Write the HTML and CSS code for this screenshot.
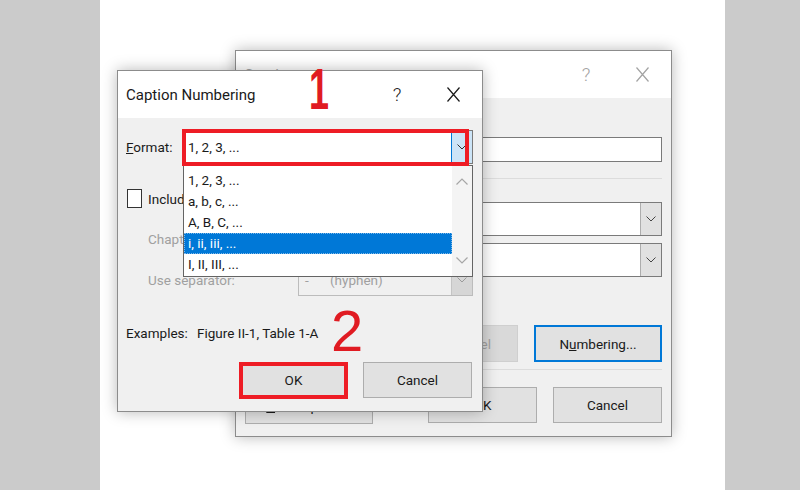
FILE: index.html
```html
<!DOCTYPE html>
<html lang="en">
<head>
    <meta charset="UTF-8">
    <title>Caption Numbering</title>
    <link rel="stylesheet" href="styles.css">
</head>
<body>
<div class="desk">
    <div class="paper">

        <!-- Caption dialog (behind) -->
        <div class="dialog dialog-back">
            <div class="titlebar inactive">
                <span class="title">Caption</span>
                <span class="help">?</span>
                <span class="close">
                    <svg width="13" height="15" viewBox="0 0 13 15"><path d="M0.5 0.5 L12.5 14.5 M12.5 0.5 L0.5 14.5" stroke="currentColor" stroke-width="1.2" fill="none"/></svg>
                </span>
            </div>
            <div class="back-body">
                <div class="back-label">Caption:</div>
                <div class="textbox">Figure 1</div>
                <div class="rule rule-top"></div>
                <div class="opt-row">
                    <span class="opt-label">Label:</span>
                    <div class="combo">
                        <span class="combo-text">Figure</span>
                        <span class="combo-arrow">
                            <svg width="10" height="6" viewBox="0 0 10 6"><path d="M0.5 0.5 L5 5 L9.5 0.5" stroke="currentColor" fill="none"/></svg>
                        </span>
                    </div>
                </div>
                <div class="opt-row">
                    <span class="opt-label">Position:</span>
                    <div class="combo">
                        <span class="combo-text">Below selected item</span>
                        <span class="combo-arrow">
                            <svg width="10" height="6" viewBox="0 0 10 6"><path d="M0.5 0.5 L5 5 L9.5 0.5" stroke="currentColor" fill="none"/></svg>
                        </span>
                    </div>
                </div>
                <div class="check-row back-check">
                    <span class="checkbox"></span>
                    <span>Exclude label from caption</span>
                </div>
                <div class="btn-row wide">
                    <button class="btn">New Label...</button>
                    <button class="btn disabled">Delete Label</button>
                    <button class="btn focused">N<u>u</u>mbering...</button>
                </div>
                <div class="rule rule-bottom"></div>
                <div class="btn-row wide last">
                    <button class="btn"><u>A</u>utoCaption...</button>
                    <button class="btn small">OK</button>
                    <button class="btn small">Cancel</button>
                </div>
            </div>
        </div>

        <!-- Caption Numbering dialog (front) -->
        <div class="dialog dialog-front">
            <div class="titlebar">
                <span class="title">Caption Numbering</span>
                <span class="help">?</span>
                <span class="close">
                    <svg width="13" height="15" viewBox="0 0 13 15"><path d="M0.5 0.5 L12.5 14.5 M12.5 0.5 L0.5 14.5" stroke="currentColor" stroke-width="1.2" fill="none"/></svg>
                </span>
            </div>
            <div class="front-body">
                <div class="format-row">
                    <span class="format-label"><u>F</u>ormat:</span>
                    <div class="combo open">
                        <span class="combo-text">1, 2, 3, ...</span>
                        <span class="combo-arrow hot">
                            <svg width="10" height="6" viewBox="0 0 10 6"><path d="M0.5 0.5 L5 5 L9.5 0.5" stroke="currentColor" fill="none"/></svg>
                        </span>
                        <div class="droplist">
                            <div class="items">
                                <div class="item">1, 2, 3, ...</div>
                                <div class="item">a, b, c, ...</div>
                                <div class="item">A, B, C, ...</div>
                                <div class="item selected">i, ii, iii, ...</div>
                                <div class="item">I, II, III, ...</div>
                            </div>
                            <div class="scrollbar">
                                <svg width="12" height="7" viewBox="0 0 12 7"><path d="M0.5 6.5 L6 1 L11.5 6.5" stroke="currentColor" fill="none" stroke-width="1.2"/></svg>
                                <svg width="12" height="7" viewBox="0 0 12 7"><path d="M0.5 0.5 L6 6 L11.5 0.5" stroke="currentColor" fill="none" stroke-width="1.2"/></svg>
                            </div>
                        </div>
                    </div>
                </div>

                <div class="check-row">
                    <span class="checkbox"></span>
                    <span>Include chapter number</span>
                </div>

                <div class="sub-row">
                    <span class="sub-label">Chapter starts with style</span>
                    <div class="combo disabled">
                        <span class="combo-text">Heading 1</span>
                        <span class="combo-arrow"></span>
                    </div>
                </div>

                <div class="sub-row sep-row">
                    <span class="sub-label">Use separator:</span>
                    <div class="combo disabled">
                        <span class="combo-text"><span class="dash">-</span>(hyphen)</span>
                        <span class="combo-arrow">
                            <svg width="10" height="6" viewBox="0 0 10 6"><path d="M0.5 0.5 L5 5 L9.5 0.5" stroke="currentColor" fill="none"/></svg>
                        </span>
                    </div>
                </div>

                <div class="examples">
                    <span class="ex-label">Examples:</span>
                    <span class="ex-value">Figure II-1, Table 1-A</span>
                </div>

                <div class="btn-row front-btns">
                    <button class="btn small default">OK</button>
                    <button class="btn small">Cancel</button>
                </div>
            </div>

            <div class="mark-box mark-format"></div>
            <div class="mark-box mark-ok"></div>
        </div>

        <span class="step step-1">1</span>
        <span class="step step-2">2</span>
    </div>
</div>
</body>
</html>
```

FILE: styles.css
```css
* {
    margin: 0;
    padding: 0;
    box-sizing: border-box;
}

body {
    background: #cbcbcb;
    font-family: Roboto, "Noto Sans", sans-serif;
    font-size: 13.5px;
    color: #1a1a1a;
}

.desk {
    width: 800px;
    height: 490px;
    overflow: hidden;
}

.paper {
    position: relative;
    margin-left: 100px;
    width: 625px;
    height: 490px;
    background: #fff;
}

/* dialogs */
.dialog {
    position: absolute;
    background: #f0f0f0;
    border: 1px solid #8c8c8c;
    box-shadow: 0 0 14px rgba(0, 0, 0, 0.28);
}

.dialog-back {
    left: 135px;
    top: 50px;
    width: 437px;
    height: 387px;
}

.dialog-front {
    left: 17px;
    top: 70px;
    width: 366px;
    height: 342px;
}

.titlebar {
    height: 47px;
    background: #fff;
    display: flex;
    align-items: center;
    padding: 0 14px 0 8px;
    color: #1a1a1a;
}

.titlebar .title {
    font-size: 15px;
    flex: 1;
    white-space: nowrap;
}

.titlebar .help {
    width: 20px;
    text-align: center;
    font-size: 19px;
    font-weight: 300;
}

.titlebar .close {
    width: 30px;
    margin-left: 31px;
    display: flex;
    justify-content: center;
}

.titlebar.inactive {
    color: #a3a3a3;
}

/* combo boxes */
.combo {
    position: relative;
    display: flex;
    align-items: center;
    background: #fff;
    border: 1px solid #7a7a7a;
}

.combo-text {
    flex: 1;
    padding-left: 4px;
    white-space: nowrap;
    overflow: hidden;
}

.combo-arrow {
    width: 21px;
    align-self: stretch;
    display: flex;
    align-items: center;
    justify-content: center;
    background: #e1e1e1;
    border-left: 1px solid #adadad;
    color: #444;
}

.combo-arrow.hot {
    background: #cce4f7;
    border-left: 1px solid #0078d7;
    color: #333;
}

.combo.disabled {
    background: #f0f0f0;
    border-color: #bcbcbc;
    color: #a0a0a0;
}

.combo.disabled .combo-arrow {
    background: #d6d6d6;
    border-left-color: #c4c4c4;
    color: #9a9a9a;
}

/* back dialog body */
.back-body {
    padding: 10px 9px 0 9px;
}

.back-label {
    height: 20px;
    margin-bottom: 9px;
}

.textbox {
    height: 25px;
    background: #fff;
    border: 1px solid #7a7a7a;
    padding-left: 4px;
    line-height: 23px;
}

.rule {
    height: 1px;
    background: #dcdcdc;
}

.rule-top {
    margin-top: 16px;
}

.rule-bottom {
    margin-top: 7px;
}

.opt-row {
    display: flex;
    align-items: center;
    margin-top: 7px;
}

.rule-top + .opt-row {
    margin-top: 23px;
}

.opt-label {
    width: 75px;
}

.opt-row .combo {
    flex: 1;
    height: 34px;
}

.btn-row {
    display: flex;
    justify-content: flex-end;
    gap: 16px;
}

.btn-row.wide {
    margin-top: 13px;
}

.btn-row.wide.last {
    margin-top: 17px;
}

.btn {
    width: 128px;
    height: 37px;
    font: inherit;
    color: #1a1a1a;
    background: #e1e1e1;
    border: 1px solid #adadad;
}

.btn-row.wide .btn:first-child {
    margin-right: auto;
}

.btn.small {
    width: 109px;
    height: 36px;
}

.btn.focused {
    border: 2px solid #0078d7;
}

.btn.default {
    border: 1px solid #0078d7;
}

.btn.disabled {
    background: #d9d9d9;
    border-color: #cfcfcf;
    color: #a0a0a0;
}

/* front dialog body */
.front-body {
    padding-left: 8px;
}

.format-row {
    display: flex;
    align-items: center;
    margin-top: 12px;
}

.format-label {
    width: 57px;
    flex-shrink: 0;
}

.format-row .combo {
    width: 290px;
    height: 34px;
}

.droplist {
    position: absolute;
    left: -1px;
    top: 34px;
    width: 290px;
    height: 112px;
    display: flex;
    background: #fff;
    border: 1px solid #646464;
    z-index: 2;
}

.items {
    width: 268px;
    padding-top: 4px;
}

.item {
    height: 21px;
    line-height: 21px;
    padding-left: 4px;
}

.item.selected {
    background: #0078d7;
    color: #fff;
    outline: 1px dotted #7fb8e8;
    outline-offset: -1px;
}

.scrollbar {
    flex: 1;
    display: flex;
    flex-direction: column;
    align-items: center;
    justify-content: space-between;
    padding: 12px 0 12px;
    background: #f4f4f4;
    color: #a6a6a6;
}

.check-row {
    display: flex;
    align-items: center;
    gap: 6px;
    height: 21px;
    margin-top: 24px;
    white-space: nowrap;
}

.check-row.back-check {
    margin-top: 14px;
}

.checkbox {
    width: 15px;
    height: 19px;
    margin-left: 1px;
    background: #fff;
    border: 1px solid #333;
}

.back-check .checkbox {
    margin-left: 0;
}

.sub-row {
    display: flex;
    align-items: center;
    height: 33px;
    margin-top: 13px;
    padding-left: 22px;
    color: #a0a0a0;
    white-space: nowrap;
}

.sub-row.sep-row {
    margin-top: 8px;
}

.sub-label {
    width: 150px;
    flex-shrink: 0;
}

.sub-row .combo {
    width: 175px;
    height: 33px;
}

.dash {
    display: inline-block;
    width: 27px;
    padding-left: 2px;
}

.examples {
    display: flex;
    align-items: center;
    height: 20px;
    margin-top: 27px;
}

.ex-label {
    width: 71px;
    flex-shrink: 0;
}

.ex-value {
    white-space: nowrap;
}

.front-btns {
    margin-top: 19px;
    padding-right: 10px;
    gap: 15px;
}

/* red annotations */
.mark-box {
    position: absolute;
    border: 4px solid #ee1c25;
    z-index: 3;
}

.mark-format {
    left: 64px;
    top: 58px;
    width: 287px;
    height: 37px;
}

.mark-ok {
    left: 121px;
    top: 291px;
    width: 109px;
    height: 37px;
}

.step {
    position: absolute;
    font-family: "Liberation Sans", Arial, sans-serif;
    font-size: 58px;
    line-height: 1;
    color: #e01b22;
    transform-origin: left top;
}

.step-1 {
    left: 209px;
    top: 60px;
    font-weight: bold;
    transform: scaleX(0.62);
}

.step-2 {
    left: 231px;
    top: 302px;
}
```
